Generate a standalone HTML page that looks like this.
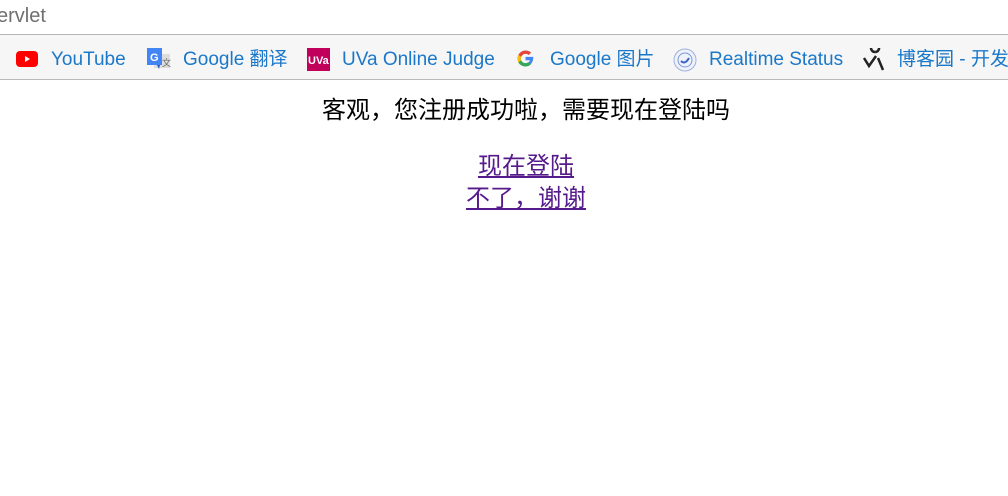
<!DOCTYPE html>
<html><head><meta charset="utf-8"><style>
html,body{margin:0;padding:0;background:#fff;width:1008px;height:496px;overflow:hidden;font-family:"Liberation Sans","Noto Sans CJK SC",sans-serif;}
.addr{position:absolute;left:0;top:0;width:1008px;height:34px;border-bottom:1px solid #b5b5b5;}
.addr span{position:absolute;left:-3px;top:5px;font-size:20px;color:#6f6f6f;}
.bm{position:absolute;left:0;top:35px;width:1008px;height:44px;background:#f6f6f6;border-bottom:1px solid #b9b9b9;}
.it{position:absolute;top:14px;font-size:19px;color:#1b78c8;white-space:nowrap;line-height:22px;}
.ic{position:absolute;top:13px;}
.main{position:absolute;top:96px;left:0;width:1052px;text-align:center;font-size:24px;color:#000;}
.main p{margin:0;line-height:30px;}
a{color:#551a8b;}
</style></head><body>
<div class="addr"><span>ervlet</span></div>
<div class="bm">
 <svg class="ic" style="left:16px;top:16px" width="22" height="16"><rect width="22" height="16" rx="4" fill="#f00"/><path d="M9 5 L14 8 L9 11Z" fill="#fff"/></svg>
 <div class="it" style="left:51px">YouTube</div>
 <svg class="ic" style="left:147px" width="24" height="22"><rect x="7" y="6" width="16" height="14" fill="#ddd"/><text x="15" y="18" font-size="9" fill="#666">文</text><rect x="0" y="0" width="15" height="17" fill="#4285f4"/><text x="3" y="13" font-size="11" fill="#fff" font-weight="bold">G</text><path d="M10 17 L13 17 L12 21Z" fill="#2a56c6"/></svg>
 <div class="it" style="left:183px">Google 翻译</div>
 <svg class="ic" style="left:307px" width="23" height="23"><rect width="23" height="23" fill="#c0005a"/><text x="1" y="16" font-size="11" font-weight="bold" fill="#fff">UVa</text></svg>
 <div class="it" style="left:342px">UVa Online Judge</div>
 <svg class="ic" style="left:516px;top:14px" width="19" height="19" viewBox="0 0 48 48"><path d="M43.6 20H24v8.5h11.3C33.7 33.4 29.3 36 24 36c-6.6 0-12-5.4-12-12s5.4-12 12-12c3.1 0 5.8 1.1 7.9 3l6-6C34.6 5.9 29.6 4 24 4 13 4 4 13 4 24s9 20 20 20 20-9 19.6-24z" fill="#4285f4"/><path d="M6.3 14.7l7 5.1C15.1 15.4 19.2 12 24 12c3.1 0 5.8 1.1 7.9 3l6-6C34.6 5.9 29.6 4 24 4 16.3 4 9.7 8.3 6.3 14.7z" fill="#ea4335"/><path d="M24 44c5.2 0 10-2 13.6-5.2l-6.5-5.3C29.1 35 26.7 36 24 36c-5.2 0-9.6-3.3-11.3-8l-7 5.4C9.100 39.600 16 44 24 44z" fill="#34a853"/><path d="M6.3 14.7l7 5.1C12.5 21.1 12 22.5 12 24s.4 3 1 4.3l-7 5.400C4.700 30.600 4 27.400 4 24s.8-6.700 2.300-9.300z" fill="#fbbc05"/></svg>
 <div class="it" style="left:550px">Google 图片</div>
 <svg class="ic" style="left:673px" width="24" height="24"><circle cx="12" cy="12" r="11" fill="#eef2fb" stroke="#9fb0de"/><circle cx="12" cy="12" r="7" fill="none" stroke="#7f97d6"/><path d="M8 13 Q12 17 16 10" stroke="#3b63c6" stroke-width="2" fill="none"/></svg>
 <div class="it" style="left:709px">Realtime Status</div>
 <svg class="ic" style="left:862px" width="24" height="24"><path d="M2 10 L7 18 L14 8 M13 4 a4 4 0 1 1 0.1 0 M16 10 L21 22" stroke="#222" stroke-width="2.5" fill="none"/></svg>
 <div class="it" style="left:897px">博客园 - 开发者</div>
</div>
<div class="main">
 <p>客观，您注册成功啦，需要现在登陆吗</p>
 <p style="margin-top:26px"><a href="#">现在登陆</a></p>
 <p style="margin-top:2px"><a href="#">不了，谢谢</a></p>
</div>
</body></html>
